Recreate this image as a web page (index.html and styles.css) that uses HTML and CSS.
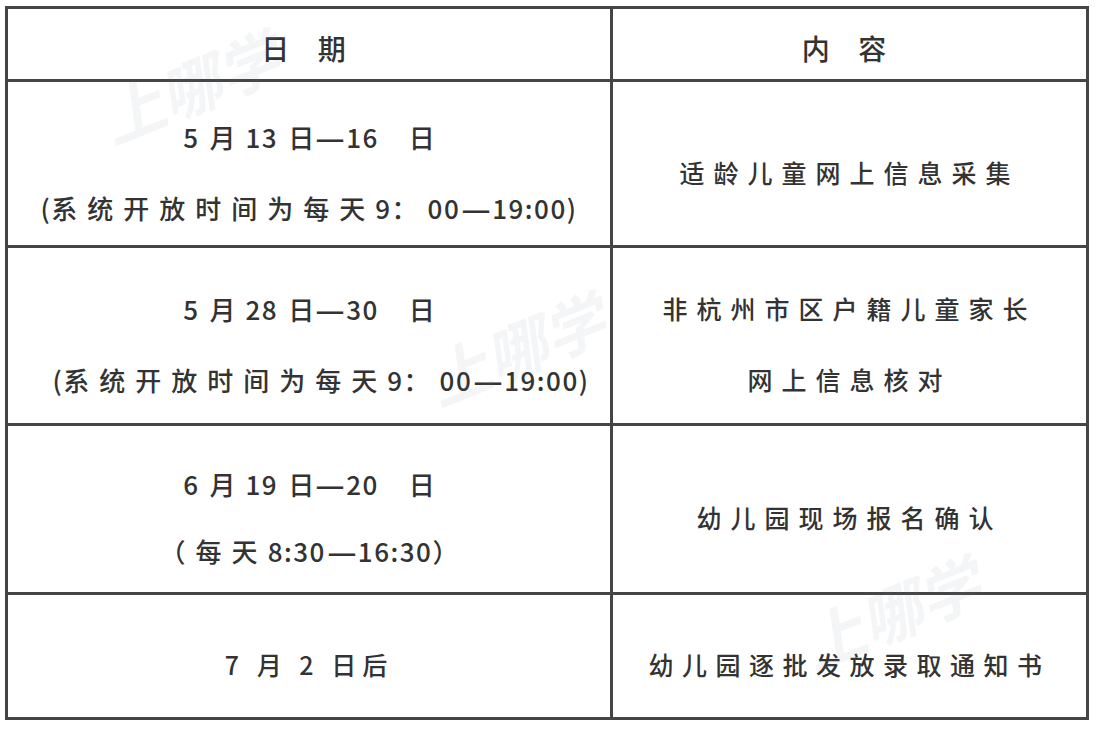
FILE: index.html
```html
<!DOCTYPE html>
<html lang="zh-CN">
<head>
<meta charset="utf-8">
<link rel="stylesheet" href="styles.css">
</head>
<body>
<div class="sheet">
  <table class="schedule">
    <colgroup><col class="c-date"><col class="c-content"></colgroup>
    <tr class="r-head">
      <th><span class="hd">日 期</span></th>
      <th><span class="hd">内 容</span></th>
    </tr>
    <tr class="r1">
      <td class="two date">
        <div>5<span class="h g">月</span>13<span class="h0 g">日</span><span class="dash">—</span>16<span class="h0 g2">日</span></div>
        <div>(<span class="h">系统开放时间为每天</span>9<span class="h">：</span>00<span class="dash">—</span>19:00)</div>
      </td>
      <td><span class="c">适龄儿童网上信息采集</span></td>
    </tr>
    <tr class="r2">
      <td class="two date">
        <div>5<span class="h g">月</span>28<span class="h0 g">日</span><span class="dash">—</span>30<span class="h0 g2">日</span></div>
        <div class="shift">(<span class="h">系统开放时间为每天</span>9<span class="h">：</span>00<span class="dash">—</span>19:00)</div>
      </td>
      <td class="two">
        <div class="c">非杭州市区户籍儿童家长</div>
        <div class="c">网上信息核对</div>
      </td>
    </tr>
    <tr class="r3">
      <td class="two tight date">
        <div>6<span class="h g">月</span>19<span class="h0 g">日</span><span class="dash">—</span>20<span class="h0 g2">日</span></div>
        <div><span class="h">（每天</span>8:30<span class="dash">—</span>16:30<span class="h0">）</span></div>
      </td>
      <td><span class="c">幼儿园现场报名确认</span></td>
    </tr>
    <tr class="r4">
      <td><span class="s">7 月 2 日后</span></td>
      <td><span class="c4">幼儿园逐批发放录取通知书</span></td>
    </tr>
  </table>
  <span class="wm wm1">上哪学</span>
  <span class="wm wm2">上哪学</span>
  <span class="wm wm3">上哪学</span>
</div>
</body>
</html>
```
FILE: styles.css
```css
html, body {
  margin: 0;
  padding: 0;
  background: #ffffff;
}
body {
  font-family: "Noto Sans CJK SC", "Noto Sans", sans-serif;
  color: #333333;
}
.sheet {
  position: relative;
  padding: 6px 0 0 5px;
  width: 1096px;
  height: 729px;
  box-sizing: border-box;
  overflow: hidden;
}
.schedule {
  border-collapse: collapse;
  table-layout: fixed;
  width: 1084px;
}
.c-date { width: 605px; }
.c-content { width: 476px; }
.schedule th,
.schedule td {
  border: 3px solid #454545;
  text-align: center;
  vertical-align: middle;
  padding: 16px 0 0 0;
  font-weight: 500;
  font-size: 25px;
  line-height: 34px;
  white-space: nowrap;
}
.r-head th { height: 62px; padding-top: 8px; }
.r1 td { height: 147px; }
.r2 td { height: 159px; }
.r3 td { height: 150px; }
.r4 td { height: 106px; }
.hd {
  font-size: 28px;
  letter-spacing: 11px;
}
.schedule td.date {
  font-size: 26px;
  letter-spacing: 1.5px;
}
.two div { line-height: 71px; }
.two.tight div { line-height: 67px; }
.two .shift { padding-left: 24px; }
.h { letter-spacing: 10px; }
.h0 { letter-spacing: 0; }
.g { margin-left: 10px; }
.g2 { margin-left: 30px; }
.dash {
  letter-spacing: 0;
  display: inline-block;
  width: 32px;
  text-align: center;
  font-weight: 700;
  transform: scaleX(1.25);
}
.c { letter-spacing: 9px; }
.c4 { letter-spacing: 8.5px; }
.s { letter-spacing: 6px; }
.wm {
  position: absolute;
  font-size: 62px;
  font-weight: 700;
  font-style: italic;
  color: rgba(120, 130, 140, 0.08);
  transform: rotate(-22deg);
  white-space: nowrap;
  pointer-events: none;
}
.wm1 { left: 96px; top: 40px; }
.wm2 { left: 422px; top: 302px; }
.wm3 { left: 797px; top: 566px; }
```
